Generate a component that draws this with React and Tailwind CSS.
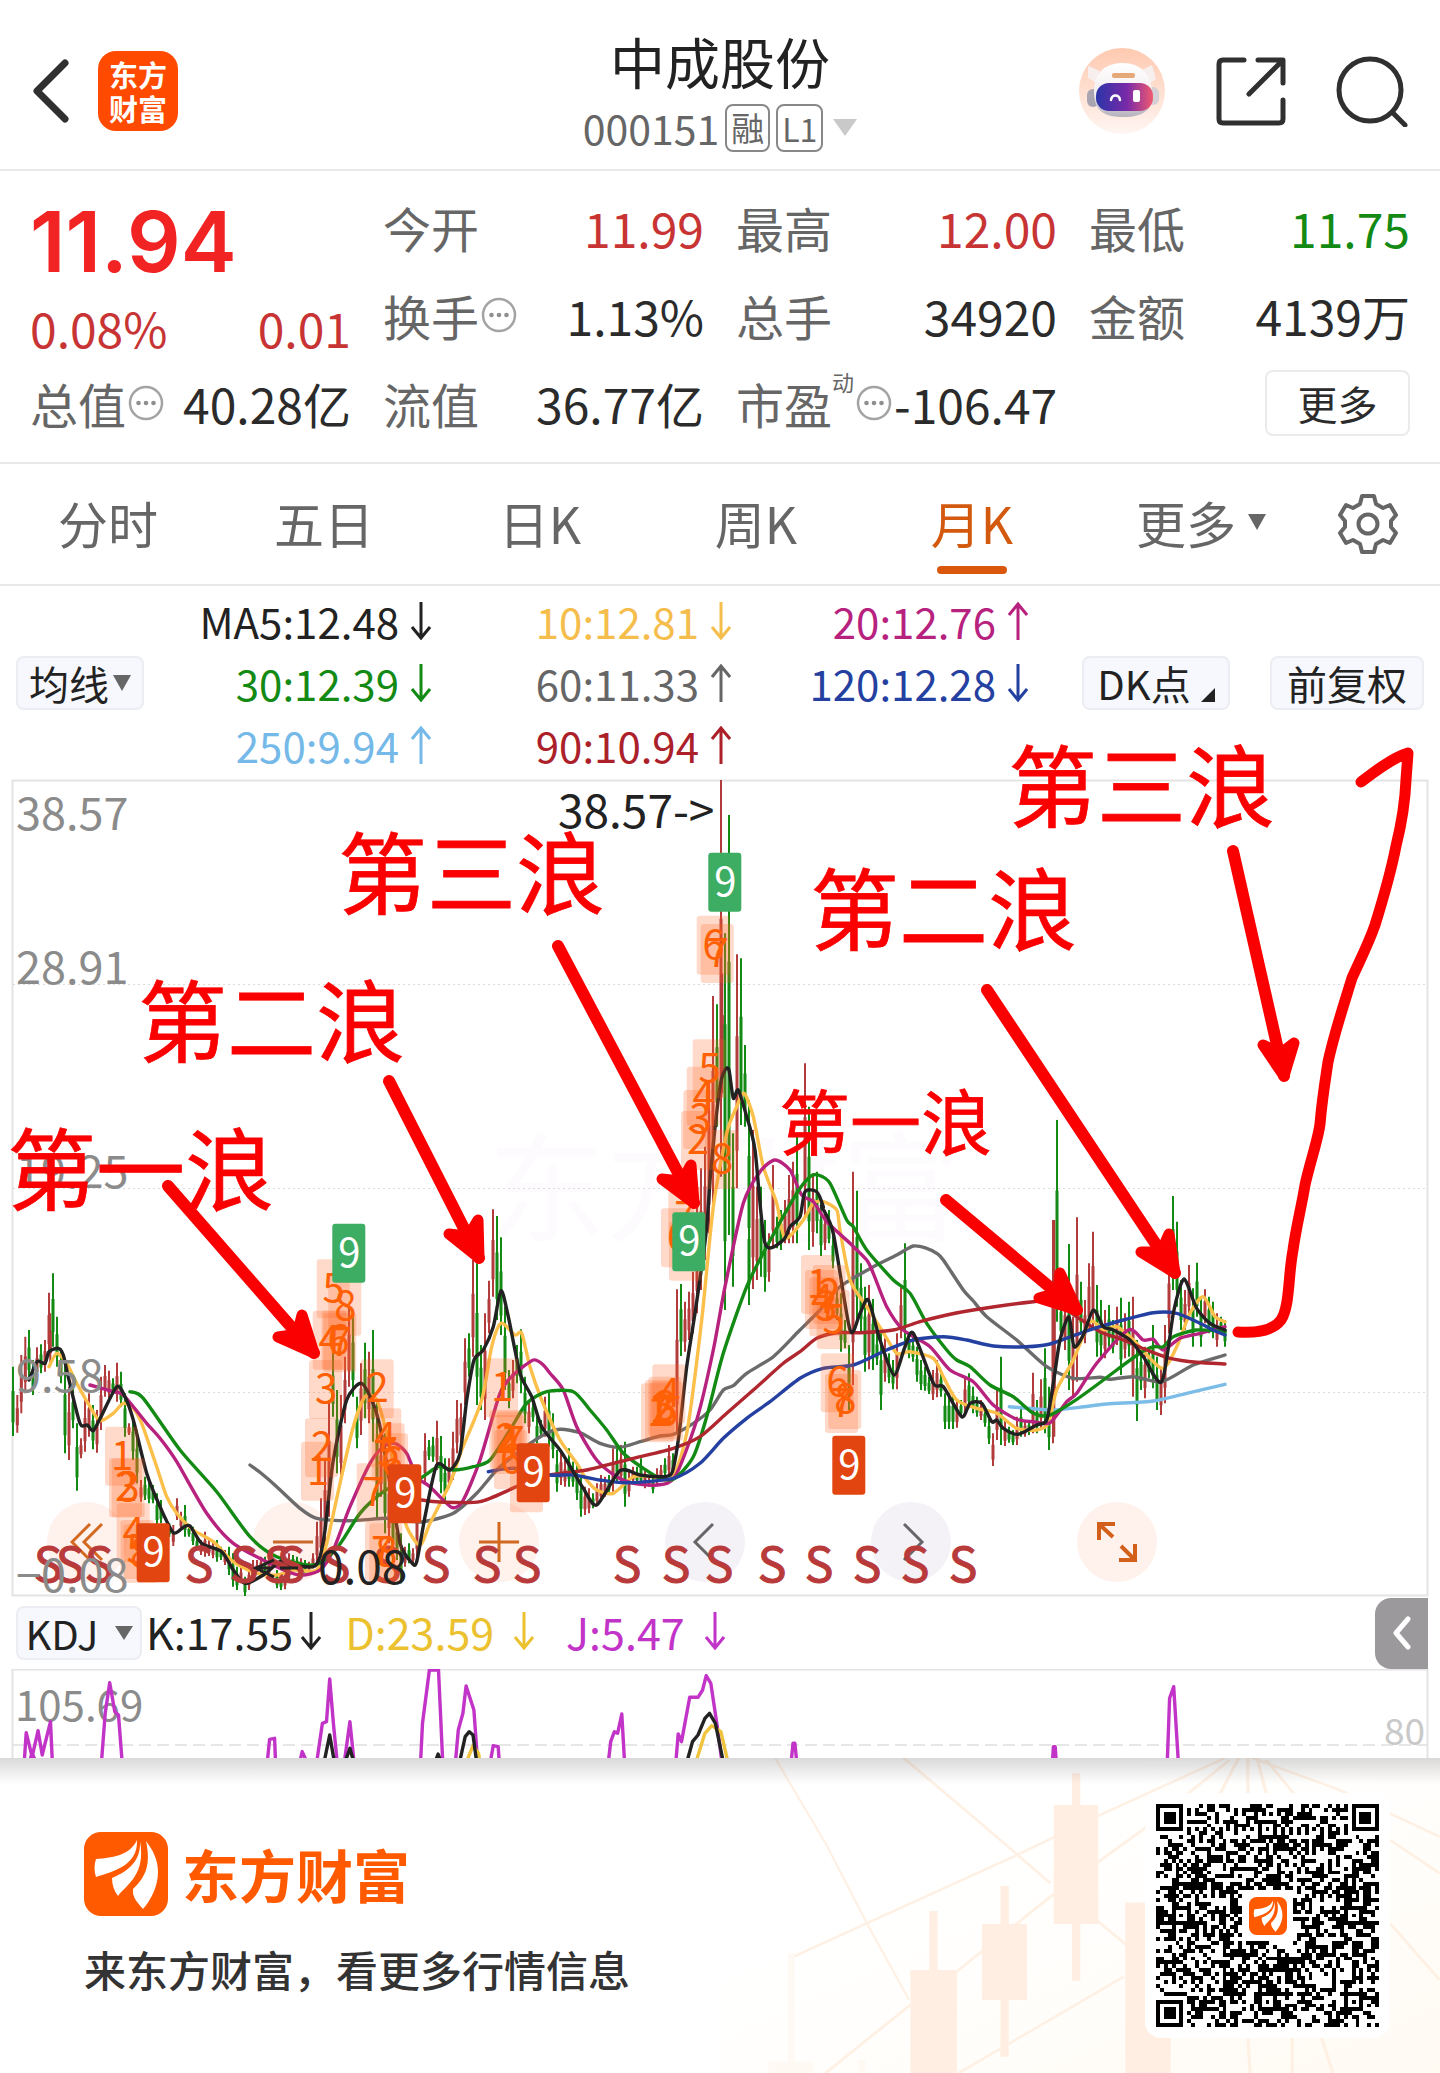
import React from "react";

/* ---------- geometry helpers ---------- */

const third = 1 / 3;
const tiles = {
  A: [0, 1100],
  B: [400, 1100],
  C: [640, 760],
  D: [800, 1100],
};
const px = (t, x) => Math.round((tiles[t][0] + x * third) * 10) / 10;
const py = (t, y) => Math.round((tiles[t][1] + y * third) * 10) / 10;

const nums = (s) => s.trim().split(/[\s,]+/).map(Number);

/* Catmull-Rom curve through all the points of the listed parts */
const smooth = (parts) => {
  const p = parts.flatMap(([t, s]) => {
    const n = nums(s);
    const out = [];
    for (let i = 0; i < n.length; i += 2) out.push([px(t, n[i]), py(t, n[i + 1])]);
    return out;
  });
  let d = `M${p[0].join(" ")}`;
  for (let i = 0; i < p.length - 1; i++) {
    const a = p[i - 1] || p[i];
    const b = p[i];
    const c = p[i + 1];
    const e = p[i + 2] || c;
    const f = (v) => Math.round(v * 10) / 10;
    d += `C${f(b[0] + (c[0] - a[0]) / 8)} ${f(b[1] + (c[1] - a[1]) / 8)} ${f(c[0] - (e[0] - b[0]) / 8)} ${f(c[1] - (e[1] - b[1]) / 8)} ${c[0]} ${c[1]}`;
  }
  return d;
};

/* ---------- candles: colour, x, high, low ---------- */

const candleData = {
  A: "g 39 800 1008;r 52 885 998;r 64 765 940;r 76 710 880;g 87 690 840;g 99 780 885;r 111 742 835;g 123 733 820;r 135 720 815;r 147 578 770;r 151 640 790;g 159 520 740;g 171 650 800;g 183 745 850;g 195 790 1060;r 207 860 1080;g 219 865 985;g 231 970 1172;r 243 1015 1075;r 255 900 1055;r 267 880 1010;g 279 915 1048;r 291 930 1058;r 303 830 990;r 315 795 890;r 327 812 895;g 339 835 880;r 351 788 905;g 363 815 920;g 375 880 1010;r 387 970 1005;g 399 950 1080;g 411 990 1150;r 423 1140 1205;g 435 1130 1200;g 447 1140 1210;g 459 1155 1210;g 471 1180 1280;g 483 1200 1270;g 508 1270 1310;r 520 1275 1338;r 531 1195 1260;r 543 1235 1290;g 555 1215 1310;g 567 1275 1310;g 579 1280 1335;g 591 1310 1350;r 603 1320 1365;r 615 1295 1370;r 627 1320 1368;r 639 1325 1375;g 651 1320 1385;g 663 1340 1380;r 675 1350 1395;g 687 1340 1425;g 699 1360 1460;g 711 1400 1470;r 723 1400 1450;g 735 1430 1488;r 747 1400 1470;r 759 1380 1440;r 771 1380 1425;r 783 1370 1420;g 795 1370 1420;r 807 1370 1430;g 831 1410 1465;g 843 1420 1470;r 855 1410 1468;r 867 1360 1440;g 879 1365 1400;g 891 1370 1405;r 903 1375 1410;g 915 1380 1420;r 927 1385 1410;r 939 1360 1405;r 951 1265 1390;r 963 1195 1380;r 975 1080 1340;r 987 900 1250;g 999 760 950;g 1011 870 1120;r 1023 885 1140;r 1035 770 970;r 1047 620 860;g 1059 640 890;g 1071 890 1045;r 1083 790 1005;g 1095 728 955;r 1107 755 970;g 1119 690 1025;g 1131 900 1255;r 1143 1000 1190;g 1155 1000 1300;r 1167 1100 1330;g 1179 1150 1380;g 1191 1250 1380;g 1203 1300 1450;r 1215 1340 1400;g 1227 1330 1390;r 1239 1345 1390;r 1251 1200 1385",
  B: "r 75 1000 1150;g 87 1020 1080;g 99 1010 1085;r 111 962 1110;g 123 1008 1180;g 135 1075 1200;r 147 1075 1165;r 159 995 1140;r 171 900 1060;r 183 910 1030;r 195 715 915;g 207 700 830;r 219 480 770;g 231 490 915;g 243 735 930;r 255 640 960;r 267 542 700;r 279 328 590;g 291 348 660;g 303 412 705;g 315 620 870;g 327 810 925;r 339 780 895;g 351 735 850;g 363 688 880;g 375 830 970;r 387 900 1000;g 399 900 965;g 411 950 1030;g 423 960 1010;r 435 890 1010;g 447 875 1040;g 459 940 1075;g 471 1050 1175;r 483 1050 1155;r 495 1080 1160;g 507 1045 1160;g 519 1085 1160;g 531 1095 1200;g 543 1130 1250;r 555 1160 1245;r 567 1165 1240;g 579 1180 1225;r 591 1150 1215;r 603 1125 1205;r 615 1130 1190;g 627 1125 1180;r 639 1045 1175;g 651 1045 1150;r 663 1035 1150;g 675 1025 1220;r 687 1110 1190;r 699 1100 1150;g 711 1100 1150;g 723 1075 1155;r 735 1110 1165;r 747 1130 1160;g 759 1120 1180;r 771 1105 1155;r 783 1095 1140;g 795 1075 1130;r 807 1035 1130;g 819 1060 1120;r 831 568 1000;g 843 552 768;r 855 605 755;r 867 575 720;r 879 515 700;r 891 300 640;r 903 205 570;r 915 140 480;r 927 -20 400;g 975 -400 630;g 987 -700 405;g 999 100 560;r 1011 -300 265;g 1047 310 615;r 1059 90 567;r 1071 260 540;g 1083 260 530;g 1095 360 575;r 1107 400 545;r 1119 195 440;g 1131 350 445;g 1143 330 450;r 1155 300 430;r 1167 225 430;r 1179 185 430;g 1191 110 430;r 1215 -110 350;g 1227 20 450;r 1239 220 440;g 1251 215 400",
  C: "r 207 960 1350;r 219 708 1350;g 231 733 1100;r 243 60 1250;r 247 640 1000;g 255 520 1300;g 267 165 1425;r 291 583 1285;g 303 595 1095;g 315 855 1100;g 327 1020 1500;g 543 1330 1487;r 555 1360 1470;g 567 1350 1450;g 423 1370 1470",
  D: "g 63 300 468;r 75 330 450;g 87 360 430;g 99 400 505;g 111 560 660;g 123 580 755;g 135 660 745;g 147 735 930;r 159 215 855;g 171 272 670;g 183 490 700;g 195 560 815;r 207 555 808;g 219 597 810;g 231 700 795;g 243 700 930;r 255 715 845;g 267 760 850;g 279 780 868;r 291 700 868;r 303 562 715;g 315 430 745;g 327 700 775;g 339 710 785;g 351 740 845;g 363 780 870;g 375 800 872;g 387 830 882;r 399 810 900;r 411 780 892;g 423 810 890;g 435 880 987;g 447 880 987;g 459 880 987;r 471 900 983;g 483 900 950;r 495 830 940;g 507 820 925;g 519 860 940;g 531 890 950;r 543 900 960;g 555 920 980;g 567 950 1032;r 579 1000 1098;r 591 870 1020;g 603 770 1035;r 615 960 1038;g 627 980 1028;g 639 990 1035;r 651 950 1035;g 663 920 1010;r 675 960 1010;g 687 960 1005;r 699 818 1000;g 711 900 1000;r 723 838 985;g 735 745 1000;g 747 860 1050;r 759 360 1030;r 763 360 1010;g 771 60 665;g 783 590 720;r 795 590 750;g 807 432 870;r 819 650 890;r 831 352 845;g 843 545 700;r 855 600 730;r 867 490 690;r 879 395 690;g 891 555 770;g 903 600 770;r 915 630 775;g 927 615 740;g 939 660 760;r 951 620 735;g 963 593 825;r 975 640 775;g 987 605 770;r 999 590 890;g 1011 720 963;g 1023 740 870;r 1035 740 895;g 1047 740 835;g 1059 675 865;g 1071 770 930;r 1083 800 945;r 1095 675 910;r 1107 470 700;g 1119 288 570;g 1131 365 620;g 1143 540 690;r 1155 570 690;r 1167 495 650;g 1179 565 740;g 1191 488 650;g 1203 590 740;r 1215 568 670;g 1227 590 700;g 1239 605 715;r 1251 640 740;g 1263 650 700;g 1275 660 740",
};

const candles = Object.entries(candleData).flatMap(([t, s]) =>
  s.split(";").map((row) => {
    const [c, x, hi, lo] = row.split(" ");
    return { c, x: px(t, +x), hi: Math.max(780, py(t, +hi)), lo: py(t, +lo) };
  })
);
const wicks = (c) =>
  candles
    .filter((k) => k.c === c)
    .map((k) => `M${k.x} ${k.hi}V${k.lo}`)
    .join("");
const bodies = (c) =>
  candles
    .filter((k) => k.c === c)
    .map((k) => `M${k.x} ${k.hi + (k.lo - k.hi) * 0.35}V${k.hi + (k.lo - k.hi) * 0.8}`)
    .join("");

/* ---------- moving averages ---------- */

const averages = [
  ["#7cbde8", [["D", "628,920 700,926 760,930 840,922 920,912 1060,903 1160,880 1275,853"]]],
  [
    "#6b6b6b",
    [
      ["A", "750,1095 790,1125 830,1160 900,1225 950,1255 1050,1262 1160,1255 1215,1262"],
      ["B", "70,1265 160,1240 230,1180 290,1110 350,1060 430,1005 480,988 540,998 600,1030 660,1042 720,1025 780,1008 820,1003 880,970 930,930 970,870 1000,857 1040,820 1120,770 1190,700"],
      ["D", "0,690 60,630 120,560 220,500 290,465 340,438 380,445 410,460 430,480 490,570 520,603 560,650 650,720 740,800 820,835 900,832 930,838 1000,830 1085,845 1180,795 1275,765"],
    ],
  ],
  [
    "#fbbf4a",
    [
      ["A", "147,800 170,760 200,790 230,850 270,920 300,962 340,940 370,910 400,925 425,970 470,1100 500,1190 530,1240 580,1290 640,1325 700,1385 770,1420 830,1425 880,1410 950,1410 980,1330 1020,1150 1060,980 1095,890 1130,900 1160,1000 1200,1180"],
      ["B", "20,1280 60,1335 90,1270 150,1150 185,1050 245,900 275,740 303,670 345,705 365,700 390,800 425,900 480,1020 530,1090 560,1140 590,1170 640,1180 700,1130 760,1130 815,1135 860,1000 905,660 940,320 980,100"],
      ["C", "290,1040 312,1000 340,1070 370,1220 410,1330 435,1435 490,1380 520,1330 550,1325 590,1350"],
      ["D", "120,390 150,540 200,620 245,690 290,760 330,755 400,775 430,830 470,900 530,925 590,940 650,985 710,990 745,970 770,870 820,780 870,665 910,690 950,680 1000,720 1085,805 1130,740 1170,640 1210,590 1245,650 1275,665"],
    ],
  ],
  [
    "#b8227f",
    [
      ["A", "270,855 340,875 370,885 440,970 480,1015 530,1085 620,1240 700,1330 830,1400 900,1425 960,1410 1000,1350 1050,1220 1110,1090 1150,1040 1185,1030 1220,1060"],
      ["B", "50,1130 90,1160 155,1222 190,1200 240,1080 300,880 340,825 400,780 430,795 450,820 490,870 530,980 590,1080 650,1130 700,1150 770,1155 825,1130 890,960 940,750 975,560 1030,310 1080,215 1125,180 1170,210"],
      ["D", "5,285 40,305 80,365 150,430 200,480 220,520 260,620 310,690 390,740 450,810 520,845 580,915 650,958 700,965 750,968 800,905 830,880 890,790 985,690 1030,720 1060,718 1090,750 1140,715 1200,700 1275,680"],
    ],
  ],
  [
    "#138a13",
    [
      ["A", "390,875 430,895 540,1050 650,1175 750,1310 830,1370 940,1395 1010,1345 1080,1240 1150,1175 1200,1150"],
      ["B", "60,1135 115,1100 160,1110 220,1100 270,1080 330,990 380,910 440,875 520,875 570,930 620,990 670,1060 730,1105 780,1135 825,1135 880,1070 920,950 970,760 1040,560 1100,440 1190,280"],
      ["D", "30,230 55,225 90,250 140,360 160,380 200,450 280,540 330,580 380,670 440,750 470,780 510,800 570,855 640,890 700,940 750,945 820,905 890,855 950,810 1020,760 1060,740 1090,740 1120,710 1190,690 1275,695"],
    ],
  ],
  [
    "#b02730",
    [
      ["B", "65,1200 120,1206 240,1205 350,1160 450,1125 560,1110 700,1075 820,1045 900,1010 980,940 1060,870 1150,790"],
      ["D", "0,755 50,715 110,698 180,698 280,690 360,665 440,645 520,630 700,605 760,605 830,650 900,695 970,720 1040,750 1110,775 1190,787 1275,792"],
    ],
  ],
  [
    "#2440a0",
    [
      ["B", "265,1115 340,1105 450,1125 520,1125 600,1140 680,1148 820,1135 900,1090 970,1015 1040,955 1110,905"],
      ["D", "0,835 70,805 160,795 260,750 340,720 430,710 500,720 580,738 680,740 750,732 840,700 900,680 970,660 1060,638 1130,640 1190,665 1240,690 1275,705"],
    ],
  ],
  [
    "#222222",
    [
      ["A", "87,840 111,785 135,790 147,755 175,745 190,765 207,840 240,970 262,975 280,992 303,950 350,860 375,890 400,960 440,1120 480,1220 520,1298 550,1282 570,1278 605,1330 665,1355 700,1410 735,1450 790,1425 840,1385 870,1395 940,1400 960,1370 975,1290 1000,1080 1040,900 1083,850 1115,900 1140,980 1170,1150 1200,1330 1235,1388"],
      ["B", "50,1385 75,1250 110,1095 150,1110 180,1060 200,900 222,780 250,750 280,680 303,572 325,650 360,820 395,890 425,980 480,1050 520,1115 550,1165 590,1215 660,1112 720,1125 780,1130 815,1120 835,1020 860,800 885,640 905,500"],
      ["C", "200,1400 215,1200 240,980 255,930 267,930 280,1015 295,990 320,1070 345,1170 375,1450 430,1440 450,1400 480,1370 495,1295 530,1295 550,1340"],
      ["D", "65,320 100,400 150,690 180,640 205,600 240,720 282,825 315,740 340,700 400,850 430,860 485,950 510,910 545,910 575,965 590,960 610,985 655,1003 710,975 740,960 760,850 780,720 807,650 822,740 850,705 880,630 910,680 940,690 990,720 1030,770 1085,845 1120,640 1140,560 1153,537 1165,560 1190,625 1230,670 1275,690"],
    ],
  ],
];

/* ---------- sequence markers ---------- */

const steps = [
  ["A", 315, 980, "1"], ["A", 327, 1075, "2"], ["A", 335, 1075, "3"], ["A", 350, 1210, "4"], ["A", 362, 1260, "5"], ["A", 372, 1272, "8"],
  ["A", 950, 478, "5"], ["A", 985, 530, "8"], ["A", 938, 632, "4"], ["A", 965, 632, "6"], ["A", 970, 640, "7"], ["A", 927, 780, "3"], ["A", 915, 955, "2"], ["A", 903, 1025, "1"],
  ["A", 1082, 778, "2"], ["A", 1105, 925, "4"], ["A", 1115, 970, "5"], ["A", 1125, 1000, "6"], ["A", 1070, 1090, "7"], ["A", 1095, 1265, "7"], ["A", 1108, 1270, "8"],
  ["B", 255, 775, "1"], ["B", 268, 930, "2"], ["B", 290, 935, "7"], ["B", 275, 945, "4"], ["B", 282, 990, "6"], ["B", 330, 1060, ""],
  ["B", 723, 850, "1"], ["B", 735, 840, "2"], ["B", 745, 830, "3"], ["B", 757, 793, "4"], ["B", 750, 845, "6"], ["B", 783, 325, "6"], ["B", 807, 365, ""],
  ["B", 805, 260, "7"],
  ["C", 170, 467, "6"], ["C", 182, 492, "7"], ["C", 158, 838, "5"], ["C", 140, 920, "4"], ["C", 130, 990, "3"], ["C", 123, 1053, "2"], ["C", 195, 1110, "8"],
  ["D", 3, 465, "1"], ["D", 38, 495, "2"], ["D", 15, 510, "4"], ["D", 28, 532, "3"], ["D", 50, 570, "5"], ["D", 62, 760, "6"], ["D", 85, 810, "8"], ["D", 75, 822, "7"],
];
const nines = [
  ["A", 997, 371, "#3cad62"], ["A", 410, 1270, "#e2450f"], ["A", 1165, 1093, "#e2450f"], ["B", 350, 1030, "#e2450f"],
  ["B", 817, 337, "#3cad62"], ["C", 205, 278, "#3cad62"], ["D", 97, 1007, "#e2450f"],
];
const sells = [48, 70, 99, 199, 244, 278, 291, 336, 387, 436, 487, 527, 627, 676, 719, 772, 819, 867, 915, 963];

const axis = [
  ["38.57", 830], ["28.91", 984], ["19.25", 1188], ["9.58", 1392], ["−0.08", 1592],
];

const waves = [
  ["第一浪", 7, 1203, 89], ["第二浪", 138, 1055, 89], ["第三浪", 338, 907, 89], ["第二浪", 810, 943, 89], ["第三浪", 1008, 820, 89], ["第一浪", 779, 1149, 71],
];
const arrows = [
  ["168,1186", "302,1315", "314,1353", "278,1337"],
  ["389,1081", "478,1220", "479,1258", "449,1234"],
  ["558,946", "691,1165", "694,1203", "662,1179"],
  ["946,1200", "1060,1273", "1077,1310", "1039,1298"],
  ["987,990", "1169,1234", "1175,1273", "1141,1252"],
  ["1233,851", "1294,1043", "1284,1076", "1263,1045"],
];

function Chart() {
  return (
    <svg viewBox="0 780 1440 817" className="block h-auto w-full overflow-visible" role="img" aria-label="月K线图">
      <g fontFamily='"Noto Sans CJK SC", sans-serif'>
        <text x="488" y="1232" fontSize="118" fill="#fdfbfd">东方财富</text>
        <path d="M12.500 780.500H1427.500V1595.500H12.500Z" fill="none" stroke="#e4e4e4" strokeWidth="2" />
        <path d="M13 984.500H1427M13 1188.500H1427M13 1392.500H1427" stroke="#dcdcdc" strokeWidth="1" strokeDasharray="2 3" />
        <g fill="none" strokeWidth="2">
          <path d={wicks("r")} stroke="#b23c3c" />
          <path d={wicks("g")} stroke="#138a13" />
        </g>
        <g fill="none" strokeWidth="3">
          <path d={bodies("r")} stroke="#b23c3c" />
          <path d={bodies("g")} stroke="#138a13" />
        </g>
        {averages.map(([color, parts]) => (
          <path key={color} d={smooth(parts)} fill="none" stroke={color} strokeWidth="3.400" strokeLinejoin="round" strokeLinecap="round" />
        ))}
        {sells.map((x) => (
          <text key={x} x={x} y="1582" fontSize="48" textAnchor="middle" fill="#b83a3a" stroke="#b83a3a" strokeWidth="1">S</text>
        ))}
        {steps.map(([t, x, y], i) => (
          <rect key={i} x={px(t, x)} y={py(t, y)} width="33" height="59" rx="3" fill="#ff6420" fillOpacity="0.24" />
        ))}
        {steps.map(([t, x, y, n], i) => (
          <text key={i} x={px(t, x) + 17} y={py(t, y) + 43} fontSize="40" textAnchor="middle" fill="#ff5f05">{n}</text>
        ))}
        {nines.map(([t, x, y, c], i) => (
          <g key={i}>
            <rect x={px(t, x)} y={py(t, y)} width="33" height="59" rx="3" fill={c} />
            <text x={px(t, x) + 17} y={py(t, y) + 43} fontSize="40" textAnchor="middle" fill="#fff">9</text>
          </g>
        ))}
        {axis.map(([label, y]) => (
          <text key={label} x="16" y={y} fontSize="45" fill="#8b8b8b">{label}</text>
        ))}
        <text x="558" y="828" fontSize="46" fill="#222">38.57-&gt;</text>
        <path d="M274 1560L256 1568L274 1577M256 1568H272M280 1568H298" fill="none" stroke="#222" strokeWidth="3" />
        <text x="318" y="1584" fontSize="46" fill="#222">0.08</text>
        {waves.map(([label, x, y, size]) => (
          <text key={x} x={x} y={y} fontSize={size} fill="#fa0000" stroke="#fa0000" strokeWidth="0.800">{label}</text>
        ))}
        <g stroke="#fa0000" fill="#fa0000" strokeLinejoin="round" strokeLinecap="round">
          {arrows.map(([from, left, tip, right]) => {
            const [lx, ly] = nums(left);
            const [rx, ry] = nums(right);
            const [tx, ty] = nums(tip);
            const cx = ((lx + rx) / 2) * 0.7 + tx * 0.3;
            const cy = ((ly + ry) / 2) * 0.7 + ty * 0.3;
            return (
              <g key={from}>
                <path d={`M${from}L${tip}`} strokeWidth="12" />
                <path d={`M${left}L${tip}L${right}L${cx} ${cy}Z`} strokeWidth="11" />
              </g>
            );
          })}
          <path
            d="M1238 1332C1254 1333 1272 1332 1281 1320C1290 1306 1288 1276 1293 1250C1296 1228 1302 1204 1305 1185C1310 1162 1318 1140 1320 1124C1322 1100 1325 1082 1328 1062C1334 1034 1344 1004 1352 978C1360 960 1368 945 1375 925C1384 896 1391 872 1396 846C1402 822 1405 804 1406 780L1408 753C1392 758 1374 772 1361 782"
            fill="none"
            strokeWidth="11"
          />
        </g>
      </g>
    </svg>
  );
}

/* ---------- KDJ pane ---------- */

const kdjLine = (s) => {
  const n = nums(s);
  const out = [];
  for (let i = 0; i < n.length; i += 2) out.push(`${Math.round(n[i] * 4.592) / 10},${Math.round(n[i + 1] * 3.333) / 10 + 1580}`);
  return out.join(" ");
};
const kdj = [
  ["#c233c8", ["53,545 57,458 70,530 83,452 92,525 110,425 114,545", "64,545 70,520 78,545", "221,545 229,400 239,308 250,395 258,405 266,545", "582,545 587,478 598,475 600,545", "653,545 658,515 668,545", "690,545 702,430 711,425 718,297 726,430 734,545", "750,545 762,425 771,545", "916,545 920,430 935,270 955,270 964,545", "992,545 998,450 1008,400 1015,318 1032,390 1040,545", "1068,545 1074,497 1085,500 1087,545", "1325,545 1330,485 1338,455 1345,460 1354,402 1360,545", "1472,545 1477,462 1484,485 1502,352 1520,352 1530,330 1538,287 1548,310 1562,440 1572,545", "1723,545 1727,490 1731,490 1735,545", "2292,545 2294,500 2298,500 2300,545", "2542,545 2547,355 2556,320 2566,545"]],
  ["#f0c33c", ["1016,545 1030,497 1042,520 1045,545", "1516,545 1535,460 1550,437 1570,455 1585,545"]],
  ["#222222", ["706,545 718,465 728,545", "752,545 762,505 770,545", "1001,545 1013,470 1022,455 1030,465 1038,545", "948,545 954,522 960,545", "1496,545 1508,485 1520,465 1535,415 1545,400 1558,430 1575,545"]],
];

function KdjChart() {
  return (
    <svg viewBox="0 1669 1440 89" className="block h-auto w-full overflow-hidden" role="img" aria-label="KDJ">
      <g fontFamily='"Noto Sans CJK SC", sans-serif'>
        <path d="M12.500 1760V1669.500H1427.500V1760" fill="none" stroke="#e4e4e4" strokeWidth="2" />
        <path d="M13 1745H1427" stroke="#e6e6e6" strokeWidth="2" strokeDasharray="12 6" />
        <text x="15" y="1721" fontSize="42" fill="#8b8b8b">105.69</text>
        <text x="1425" y="1745" fontSize="37" textAnchor="end" fill="#c9c9c9">80</text>
        {kdj.map(([c, lines]) =>
          lines.map((l) => <polyline key={l} points={kdjLine(l)} fill="none" stroke={c} strokeWidth="3.400" strokeLinejoin="round" />)
        )}
      </g>
    </svg>
  );
}

/* ---------- small pieces ---------- */

function Trend({ up }) {
  return (
    <svg viewBox="0 0 20 38" className="h-[38px] w-5 shrink-0" fill="none" stroke="currentColor" strokeWidth="3" aria-label={up ? "上升" : "下降"}>
      <path d={up ? "M10 38V2M1 13L10 2L19 13" : "M10 0V36M1 25L10 36L19 25"} />
    </svg>
  );
}

function More() {
  return (
    <button aria-label="说明" className="shrink-0">
      <svg viewBox="0 0 36 36" className="mx-0.5 size-9" fill="none" stroke="#a3a3a3" strokeWidth="2.500">
        <circle cx="18" cy="18" r="16" />
        <g fill="#8f8f8f" stroke="none">
          <circle cx="10.500" cy="18" r="2.300" />
          <circle cx="18" cy="18" r="2.300" />
          <circle cx="25.500" cy="18" r="2.300" />
        </g>
      </svg>
    </button>
  );
}

function Stat({ label, extra, value, tone = "text-[#2b2b2b]" }) {
  return (
    <div className="flex h-[88px] items-center justify-between whitespace-nowrap">
      <div className="flex items-center text-[#666]">
        <span>{label}</span>
        {extra}
      </div>
      <span className={tone}>{value}</span>
    </div>
  );
}

function Logo({ className }) {
  return (
    <svg viewBox="0 0 84 84" className={className} aria-hidden="true">
      <rect width="84" height="84" rx="17" fill="#ff5a00" />
      <g fill="#fff">
        <path d="M53 8C47 22 30 26 12 27C10 33 10 39 12 45C31 39 54 33 53 8Z" />
        <path d="M56 9C57 27 47 38 28 46C28 53 30 59 34 64C43 52 62 43 56 9Z" />
        <path d="M62 9C67 32 62 45 49 57C48 65 53 70 59 77C67 68 74 54 74 40C74 28 69 18 62 9Z" />
      </g>
    </svg>
  );
}

/* ---------- QR code ---------- */

const N = 57;
const finders = [[0, 0], [N - 7, 0], [0, N - 7]];
const aligns = [[28, 6], [6, 28], [50, 28], [28, 50], [50, 50]];
const qrPath = (() => {
  let seed = 20231;
  const rand = () => {
    seed = (seed * 1103515245 + 12345) % 2147483648;
    return seed / 2147483648;
  };
  let d = "";
  for (let y = 0; y < N; y++)
    for (let x = 0; x < N; x++) {
      let on = rand() > 0.49;
      if (y === 6 || x === 6) on = (x + y) % 2 === 0;
      for (const [ax, ay] of aligns) {
        const m = Math.max(Math.abs(x - ax), Math.abs(y - ay));
        if (m <= 2) on = m !== 1;
      }
      for (const [fx, fy] of finders) {
        const m = Math.max(Math.abs(x - fx - 3), Math.abs(y - fy - 3));
        if (m <= 4) on = m === 3 || m <= 1;
      }
      if (Math.abs(x - 28) <= 6 && Math.abs(y - 28) <= 6) on = false;
      if (on) d += `M${x} ${y}h1v1h-1z`;
    }
  return d;
})();

const candlesBg = [
  [415, 516, 660, 1100, 465, 483], [571, 669, 522, 750, 620, 408, 920], [727, 824, 165, 522, 776, 70, 692], [883, 982, 458, 1100, 930, 458],
];

function FooterArt() {
  return (
    <svg viewBox="0 0 720 315" className="absolute inset-y-0 right-0 h-full w-1/2" preserveAspectRatio="none" aria-hidden="true">
      <defs>
        <linearGradient id="glow" x1="0" y1="0" x2="1" y2="1">
          <stop offset="0.300" stopColor="#fffdf8" stopOpacity="0" />
          <stop offset="1" stopColor="#fffaf2" />
        </linearGradient>
      </defs>
      <rect width="720" height="315" fill="url(#glow)" />
      <g transform="translate(0 -8) scale(.459 .3333)">
        <g stroke="#fff0e4" strokeWidth="7" fill="none">
          <path d="M120 24L230 280L320 520L412 750" strokeWidth="5" />
          <path d="M400 24L560 210L720 400M820 510L890 590M1100 24L820 200L655 310L320 520L160 620M1110 30L940 220L720 440L520 660L410 770L230 969M880 680L520 969M1160 24L1350 120L1568 260M1130 24L1090 130M1150 24V130M1170 24L1190 130M1190 30L1250 130M1460 270L1568 370M1460 520L1568 690M1150 860L1155 969M1310 860L1335 969M1247 860V969" />
          <path d="M155 610V935M310 930V969" strokeWidth="14" stroke="#fff9f3" />
        </g>
        <path d="M105 935H203V1000H105Z" fill="#fff9f3" />
        {candlesBg.map(([x1, x2, y1, y2, cx, top, bottom]) => (
          <g key={x1} fill="#ffeee1">
            <rect x={x1} y={y1} width={x2 - x1} height={y2 - y1} />
            <rect x={cx - 9} y={top} width="18" height={(bottom || y2) - top} />
          </g>
        ))}
      </g>
    </svg>
  );
}

const maRows = [
  ["MA5:12.48", false, "text-[#222]"], ["10:12.81", false, "text-[#f5bd4c]"], ["20:12.76", true, "text-[#b8227f]"],
  ["30:12.39", false, "text-[#138a13]"], ["60:11.33", true, "text-[#666]"], ["120:12.28", false, "text-[#2440a0]"],
  ["250:9.94", true, "text-[#74b9e8]"], ["90:10.94", true, "text-[#ab2029]"],
];

const chip = "flex h-[54px] shrink-0 items-center justify-center rounded-lg border-2 border-[#ebedf2] bg-[#f6f8fd] whitespace-nowrap text-[#222]";
const round = "flex size-20 shrink-0 items-center justify-center rounded-full";

export default function App() {
  return (
    <main className='w-full overflow-hidden bg-white font-["Noto_Sans_CJK_SC",sans-serif] leading-none text-[#2b2b2b]'>
      <header className="flex h-[171px] items-center border-b-2 border-[#e8e8e8] px-8">
        <div className="flex flex-1 items-center gap-7 pt-3">
          <button aria-label="返回">
            <svg viewBox="0 0 38 66" className="h-[66px] w-[38px]" fill="none" stroke="#303030" strokeWidth="7" strokeLinejoin="round" strokeLinecap="round">
              <path d="M33 5L5 33L33 61" />
            </svg>
          </button>
          <div className="flex size-20 flex-col items-center justify-center rounded-[18px] bg-[#ff4a00] text-[29px] leading-[34px] font-bold text-white">
            <span>东方</span>
            <span>财富</span>
          </div>
        </div>
        <div className="flex flex-col items-center gap-3 pt-2.5">
          <h1 className="text-[55px] leading-[64px] text-[#222]">中成股份</h1>
          <button className="flex items-center gap-1.5 text-[41px] text-[#666]" aria-label="000151 融 L1">
            <span>000151</span>
            <span className="flex h-12 items-center rounded-lg border-2 border-[#888] px-1 text-[33px]">融</span>
            <span className="flex h-12 items-center rounded-lg border-2 border-[#888] px-1 text-[32px]">L1</span>
            <svg viewBox="0 0 24 17" className="ml-1 h-[17px] w-6" fill="#c9c9c9"><path d="M0 0H24L12 17Z" /></svg>
          </button>
        </div>
        <div className="flex flex-1 items-center justify-end gap-[50px] pt-3">
          <button aria-label="智能助手">
            <svg viewBox="0 0 88 88" className="size-[88px]">
              <defs>
                <linearGradient id="halo" x1="0" y1="0" x2="0" y2="1"><stop offset="0" stopColor="#ffc9b0" /><stop offset="1" stopColor="#fff6f2" /></linearGradient>
                <linearGradient id="visor" x1="0" y1="0" x2="1" y2="0"><stop offset="0" stopColor="#2b34a8" /><stop offset="0.550" stopColor="#7a2aa8" /><stop offset="1" stopColor="#f05a70" /></linearGradient>
                <linearGradient id="shell" x1="0" y1="0" x2="0" y2="1"><stop offset="0" stopColor="#ffffff" /><stop offset="0.550" stopColor="#f3eef0" /><stop offset="1" stopColor="#b5b1bd" /></linearGradient>
              </defs>
              <circle cx="44" cy="44" r="43" fill="url(#halo)" />
              <path d="M10 19L22 24L18 36L10 31ZM74 18L78 32L70 38L62 24Z" fill="#f7eeee" />
              <rect x="9" y="42" width="12" height="18" rx="6" fill="#a9a5b0" />
              <rect x="69" y="40" width="12" height="18" rx="6" fill="#d5cfd6" />
              <path d="M16 45C16 25 28 16 45 16C62 16 74 27 74 46C76 62 66 70 45 70C24 70 16 62 16 45Z" fill="url(#shell)" />
              <rect x="34" y="26" width="23" height="5" rx="2" fill="#e5a878" />
              <rect x="18" y="36" width="57" height="28" rx="13" fill="url(#visor)" />
              <path d="M33 53C34 47 41 47 42 53" fill="none" stroke="#fff" strokeWidth="2.500" strokeLinecap="round" />
              <rect x="55" y="43" width="7" height="12" rx="2" fill="#fff" />
            </svg>
          </button>
          <button aria-label="分享">
            <svg viewBox="0 0 70 70" className="size-[70px]" fill="none" stroke="#303030" strokeWidth="5" strokeLinecap="round" strokeLinejoin="round">
              <path d="M28 4H7Q3 4 3 8V63Q3 67 7 67H63Q67 67 67 63V44M42 4H67V27M66 5L33 38" />
            </svg>
          </button>
          <button aria-label="搜索">
            <svg viewBox="0 0 72 72" className="size-[72px]" fill="none" stroke="#303030" strokeWidth="5" strokeLinecap="round">
              <circle cx="34" cy="35" r="31" />
              <path d="M57 58L69 70" />
            </svg>
          </button>
        </div>
      </header>

      <section className="grid h-[293px] grid-cols-4 gap-x-8 border-b-2 border-[#e8e8e8] px-[30px] pt-3 text-[48px]">
        <div>
          <div className="flex h-28 items-center pt-1.5 font-[Inter] text-[84px] font-semibold text-[#f22323]">11.94</div>
          <div className="flex h-16 items-center justify-between text-[#c83434]">
            <span>0.08%</span>
            <span>0.01</span>
          </div>
          <Stat label="总值" extra={<More />} value="40.28亿" />
        </div>
        <div>
          <Stat label="今开" value="11.99" tone="text-[#c83434]" />
          <Stat label="换手" extra={<More />} value="1.13%" />
          <Stat label="流值" value="36.77亿" />
        </div>
        <div>
          <Stat label="最高" value="12.00" tone="text-[#c83434]" />
          <Stat label="总手" value="34920" />
          <Stat label="市盈" extra={<><sup className="top-[-22px] text-[22px]">动</sup><More /></>} value="-106.47" />
        </div>
        <div>
          <Stat label="最低" value="11.75" tone="text-[#138a13]" />
          <Stat label="金额" value="4139万" />
          <div className="flex h-[88px] items-center justify-end">
            <button className="flex h-[66px] w-[145px] items-center justify-center rounded-lg border-2 border-[#ebebeb] text-[40px]">更多</button>
          </div>
        </div>
      </section>

      <nav className="grid h-[122px] grid-cols-[repeat(6,216fr)_144fr] border-b-2 border-[#e8e8e8] text-[50px] text-[#666]">
        {["分时", "五日", "日K", "周K"].map((t) => (
          <button key={t} className="flex items-center justify-center pb-1">{t}</button>
        ))}
        <button className="relative flex items-center justify-center pb-1 text-[#d3590f]">
          月K
          <span className="absolute bottom-2.5 h-2 w-[70px] rounded-full bg-[#d9580d]" />
        </button>
        <button className="flex items-center justify-end gap-3 pr-[30px] pb-1">
          更多
          <svg viewBox="0 0 18 16" className="h-4 w-[18px]" fill="#666"><path d="M0 0H18L9 16Z" /></svg>
        </button>
        <button aria-label="设置" className="flex items-center justify-center">
          <svg viewBox="0 0 60 60" className="size-[60px]" fill="none" stroke="#666" strokeWidth="4" strokeLinejoin="round">
            <path d="M24 2H36L38 10L45 14L52 11L58 21L53 27V33L58 39L52 49L45 46L38 50L36 58H24L22 50L15 46L8 49L2 39L7 33V27L2 21L8 11L15 14L22 10Z" />
            <circle cx="30" cy="30" r="9.500" />
          </svg>
        </button>
      </nav>

      <section className="flex items-center px-4 py-1 text-[42px]">
        <button className={`${chip} w-32 gap-1 text-[40px]`}>
          均线
          <svg viewBox="0 0 18 16" className="h-4 w-[18px]" fill="#666"><path d="M0 0H18L9 16Z" /></svg>
        </button>
        <div className="grid flex-1 grid-cols-[287fr_300fr_297fr]">
          {maRows.map(([t, up, tone]) => (
            <div key={t} className={`flex h-[62px] items-center justify-end gap-3 ${tone}`}>
              <span>{t}</span>
              <Trend up={up} />
            </div>
          ))}
        </div>
        <button className={`${chip} ml-[54px] w-[148px] gap-2.5 text-[40px]`}>
          DK点
          <svg viewBox="0 0 14 14" className="mt-6 size-3.5" fill="#222"><path d="M14 0V14H0Z" /></svg>
        </button>
        <button className={`${chip} ml-10 w-[154px] text-[40px]`}>前复权</button>
      </section>

      <section className="relative">
        <div className="absolute inset-x-[47px] bottom-[15px] flex gap-[126px]">
          <button aria-label="最早" className={`${round} bg-[#fff1ec]`}>
            <svg viewBox="0 0 34 40" className="h-10 w-[34px]" fill="none" stroke="#d2691e" strokeWidth="3"><path d="M20 2L2 20L20 38M32 2L14 20L32 38" /></svg>
          </button>
          <button aria-label="缩小" className={`${round} bg-[#fff1ec]`}>
            <svg viewBox="0 0 40 40" className="size-10" stroke="#c9692a" strokeWidth="3"><path d="M0 20H40" /></svg>
          </button>
          <button aria-label="放大" className={`${round} bg-[#fff1ec]`}>
            <svg viewBox="0 0 40 40" className="size-10" stroke="#d2691e" strokeWidth="3"><path d="M0 20H40M20 0V40" /></svg>
          </button>
          <button aria-label="向左" className={`${round} bg-[#f4f1f7]`}>
            <svg viewBox="0 0 40 40" className="size-10" fill="none" stroke="#666" strokeWidth="3"><path d="M28 2L10 20L28 38" /></svg>
          </button>
          <button aria-label="向右" className={`${round} bg-[#f4f1f7]`}>
            <svg viewBox="0 0 40 40" className="size-10" fill="none" stroke="#666" strokeWidth="3"><path d="M13 2L31 20L13 38" /></svg>
          </button>
          <button aria-label="全屏" className={`${round} bg-[#fff1ec]`}>
            <svg viewBox="0 0 40 40" className="size-10" fill="none" stroke="#d2601a" strokeWidth="4"><path d="M2 18V2H18M2 2L16 15M38 22V38H22M38 38L24 24" /></svg>
          </button>
        </div>
        <div className="relative">
          <Chart />
        </div>
      </section>

      <section className="flex h-[72px] items-center pr-3 pl-4 text-[43px]">
        <button className={`${chip} w-[126px] gap-4 text-[40px]`}>
          KDJ
          <svg viewBox="0 0 18 14" className="h-3.5 w-[18px]" fill="#666"><path d="M0 0H18L9 14Z" /></svg>
        </button>
        <span className="ml-1 flex items-center gap-2 pb-1 text-[#222]">K:17.55 <Trend /></span>
        <span className="ml-6 flex items-center gap-5 pb-1 text-[#ecc12f]">D:23.59 <Trend /></span>
        <span className="ml-8 flex items-center gap-5 pb-1 text-[#c233c8]">J:5.47 <Trend /></span>
        <button aria-label="展开" className="ml-auto flex h-[71px] w-[53px] items-center justify-center rounded-l-2xl bg-[#9b999b]">
          <svg viewBox="0 0 20 34" className="h-[34px] w-5" fill="none" stroke="#fff" strokeWidth="5" strokeLinecap="round" strokeLinejoin="round"><path d="M16 3L4 17L16 31" /></svg>
        </button>
      </section>

      <KdjChart />

      <footer className="relative flex h-[315px] items-center justify-between pr-[50px] pl-[84px]">
        <FooterArt />
        <div className="absolute inset-x-0 top-0 h-[26px] bg-gradient-to-b from-black/15 to-black/0" />
        <div className="relative flex flex-col gap-7 pb-1.5">
          <div className="flex items-center gap-3.5">
            <Logo className="size-[84px]" />
            <span className="text-[57px] font-bold text-[#ff5a00]">东方财富</span>
          </div>
          <p className="text-[42px] leading-[50px] font-medium text-[#333]">来东方财富，看更多行情信息</p>
        </div>
        <div className="relative rounded-2xl bg-white p-[11px]">
          <svg viewBox="0 0 57 57" className="size-[223px]" shapeRendering="crispEdges" role="img" aria-label="二维码">
            <path d={qrPath} fill="#000" />
          </svg>
          <div className="absolute inset-0 flex items-center justify-center">
            <Logo className="size-[38px]" />
          </div>
        </div>
      </footer>
    </main>
  );
}
